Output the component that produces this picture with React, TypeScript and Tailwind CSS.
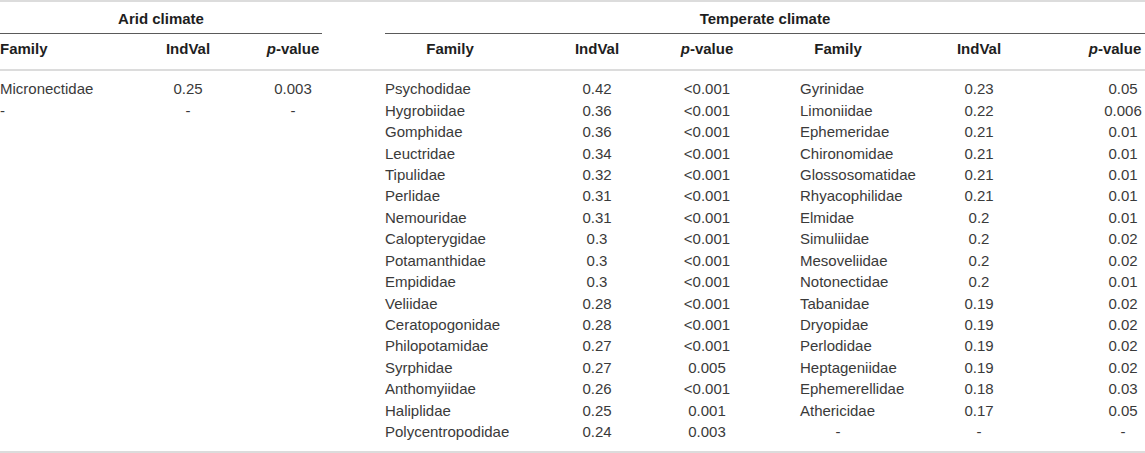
import React from "react";

const arid: [string, string, string][] = [
  ["Micronectidae", "0.25", "0.003"],
  ["-", "-", "-"],
];

const t1: [string, string, string][] = [
  ["Psychodidae", "0.42", "<0.001"],
  ["Hygrobiidae", "0.36", "<0.001"],
  ["Gomphidae", "0.36", "<0.001"],
  ["Leuctridae", "0.34", "<0.001"],
  ["Tipulidae", "0.32", "<0.001"],
  ["Perlidae", "0.31", "<0.001"],
  ["Nemouridae", "0.31", "<0.001"],
  ["Calopterygidae", "0.3", "<0.001"],
  ["Potamanthidae", "0.3", "<0.001"],
  ["Empididae", "0.3", "<0.001"],
  ["Veliidae", "0.28", "<0.001"],
  ["Ceratopogonidae", "0.28", "<0.001"],
  ["Philopotamidae", "0.27", "<0.001"],
  ["Syrphidae", "0.27", "0.005"],
  ["Anthomyiidae", "0.26", "<0.001"],
  ["Haliplidae", "0.25", "0.001"],
  ["Polycentropodidae", "0.24", "0.003"],
];

const t2: [string, string, string][] = [
  ["Gyrinidae", "0.23", "0.05"],
  ["Limoniidae", "0.22", "0.006"],
  ["Ephemeridae", "0.21", "0.01"],
  ["Chironomidae", "0.21", "0.01"],
  ["Glossosomatidae", "0.21", "0.01"],
  ["Rhyacophilidae", "0.21", "0.01"],
  ["Elmidae", "0.2", "0.01"],
  ["Simuliidae", "0.2", "0.02"],
  ["Mesoveliidae", "0.2", "0.02"],
  ["Notonectidae", "0.2", "0.01"],
  ["Tabanidae", "0.19", "0.02"],
  ["Dryopidae", "0.19", "0.02"],
  ["Perlodidae", "0.19", "0.02"],
  ["Heptageniidae", "0.19", "0.02"],
  ["Ephemerellidae", "0.18", "0.03"],
  ["Athericidae", "0.17", "0.05"],
  ["-", "-", "-"],
];

const grid =
  "grid grid-cols-[150px_76px_38px_58px_63px_130px_45px_74px_38px_70px_58px_76px_66px_74px_69px_60px]";

function PHead() {
  return (
    <span>
      <i>p</i>-value
    </span>
  );
}

export default function App() {
  const rows = Array.from({ length: 17 });
  return (
    <div
      className="w-[1145px] h-[453px] bg-white text-[15px] text-[#3a3a3a] border-t-2 border-b-2 border-[#dcdcdc] flex flex-col overflow-hidden"
      style={{ fontFamily: '"Liberation Sans", Arial, sans-serif' }}
    >
      {/* group headers */}
      <div className={`${grid} h-[32px]`}>
        <div className="col-start-1 col-span-4 border-b border-[#5a5a5a] flex items-center justify-center pt-[4px] font-bold text-[#1e1e1e]">
          Arid climate
        </div>
        <div className="col-start-6 col-span-11 border-b border-[#5a5a5a] flex items-center justify-center pt-[4px] font-bold text-[#1e1e1e]">
          Temperate climate
        </div>
      </div>
      {/* column headers */}
      <div className={`${grid} h-[37px] items-center pb-[4px] border-b-2 border-[#dcdcdc] font-bold text-[#1e1e1e] whitespace-nowrap`}>
        <div className="col-start-1 text-left">Family</div>
        <div className="col-start-2 text-center">IndVal</div>
        <div className="col-start-4 text-center"><PHead /></div>
        <div className="col-start-6 text-center">Family</div>
        <div className="col-start-8 text-center">IndVal</div>
        <div className="col-start-10 text-center"><PHead /></div>
        <div className="col-start-12 text-center">Family</div>
        <div className="col-start-14 text-center">IndVal</div>
        <div className="col-start-16 text-center"><PHead /></div>
      </div>
      {/* body */}
      <div className="pt-[7px]">
        {rows.map((_, i) => {
          const a = arid[i];
          const b = t1[i];
          const c = t2[i];
          return (
            <div key={i} className={`${grid} h-[21.44px] items-center leading-[21px] whitespace-nowrap`}>
              {a && (
                <>
                  <div className="col-start-1 text-left">{a[0]}</div>
                  <div className="col-start-2 text-center">{a[1]}</div>
                  <div className="col-start-4 text-center">{a[2]}</div>
                </>
              )}
              {b && (
                <>
                  <div className="col-start-6 text-left">{b[0]}</div>
                  <div className="col-start-8 text-center">{b[1]}</div>
                  <div className="col-start-10 text-center">{b[2]}</div>
                </>
              )}
              {c && (
                <>
                  <div className={`col-start-12 ${c[0] === "-" ? "text-center" : "text-left"}`}>{c[0]}</div>
                  <div className="col-start-14 text-center">{c[1]}</div>
                  <div className="col-start-16 text-center pl-[18px] pr-[2px]">{c[2]}</div>
                </>
              )}
            </div>
          );
        })}
      </div>
    </div>
  );
}
